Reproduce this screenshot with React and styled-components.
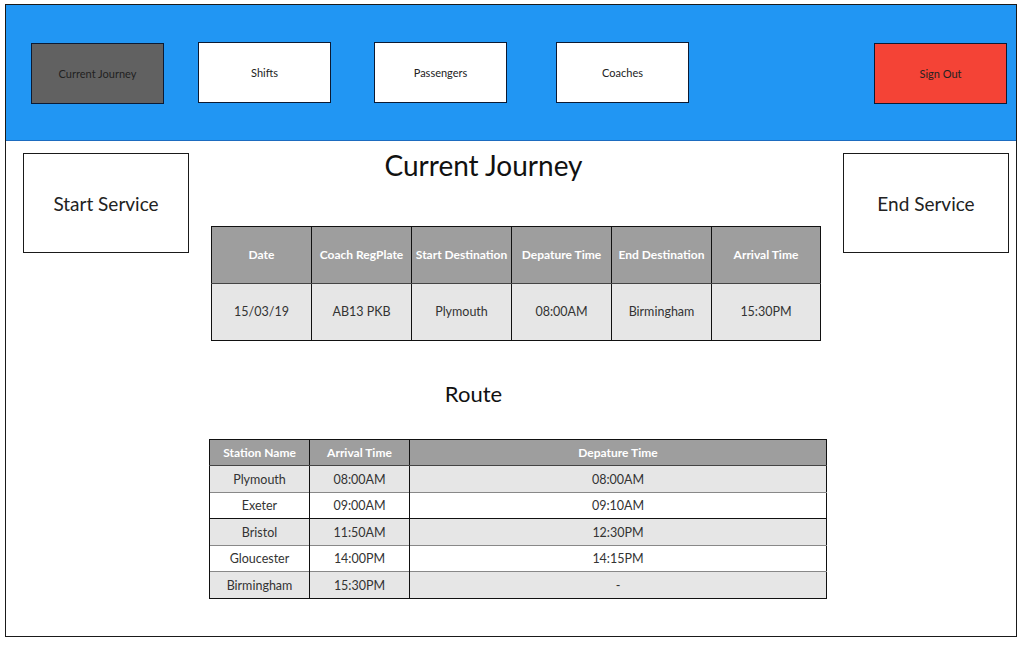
import React from 'react'
import styled, { createGlobalStyle } from 'styled-components'

const GlobalStyle = createGlobalStyle`
  body {
    margin: 0;
    background: #ffffff;
    font-family: Lato, "Open Sans", sans-serif;
  }
`

const Frame = styled.div`
  margin: 4px 0 0 5px;
  width: 1010px;
  height: 631px;
  border: 1px solid #1a1a1a;
  display: flex;
  flex-direction: column;
`

const Header = styled.div`
  height: 135px;
  background-color: #2196f3;
  border-bottom: 1px solid #1d6cc0;
  display: flex;
  align-items: center;
  padding: 0 9px 0 25px;
`

const NavButton = styled.div`
  width: 131px;
  height: 59px;
  flex-shrink: 0;
  border: 1px solid #0b1a33;
  display: flex;
  align-items: center;
  justify-content: center;
  font-size: 11px;
  color: #222;
  background-color: ${({ $bg }) => $bg || '#ffffff'};
  margin-left: ${({ $gap }) => $gap || '0'};
  margin-top: ${({ $dy }) => $dy || '0'};
`

const Body = styled.div`
  flex: 1;
  display: flex;
  align-items: flex-start;
  padding: 12px 7px 0 17px;
`

const SideButton = styled.div`
  width: 164px;
  height: 98px;
  border: 1px solid #1a1a1a;
  display: flex;
  align-items: center;
  justify-content: center;
  font-size: 19px;
  color: #222;
  flex-shrink: 0;
`

const Center = styled.div`
  flex: 1;
  display: flex;
  flex-direction: column;
`

const Heading = styled.div`
  text-align: center;
  color: #111;
  font-size: ${({ $size }) => $size};
  padding-right: ${({ $shift }) => $shift};
  margin-top: ${({ $top }) => $top};
  line-height: 1.2;
`

const Table = styled.table`
  border-collapse: collapse;
  table-layout: fixed;
  width: ${({ $width }) => $width};
  margin-left: ${({ $left }) => $left};
  margin-top: ${({ $top }) => $top};
  border: 1px solid #111;
  font-size: 12px;
`

const HeadCell = styled.th`
  background-color: #9e9e9e;
  color: #ffffff;
  font-weight: 700;
  height: ${({ $h }) => $h};
  border-left: 1px solid #111;
  border-bottom: 1px solid #444;
  padding: 0;
  text-align: center;
  white-space: nowrap;
`

const Cell = styled.td`
  background-color: ${({ $alt }) => ($alt ? '#ffffff' : '#e6e6e6')};
  color: #333;
  font-size: 12.5px;
  height: ${({ $h }) => $h};
  border-left: 1px solid #111;
  border-top: 1px solid ${({ $line }) => $line || '#111'};
  padding: 0;
  text-align: center;
`

const journeyCols = ['Date', 'Coach RegPlate', 'Start Destination', 'Depature Time', 'End Destination', 'Arrival Time']
const journeyRow = ['15/03/19', 'AB13 PKB', 'Plymouth', '08:00AM', 'Birmingham', '15:30PM']

const stops = [
  ['Plymouth', '08:00AM', '08:00AM', '#444'],
  ['Exeter', '09:00AM', '09:10AM', '#888'],
  ['Bristol', '11:50AM', '12:30PM', '#111'],
  ['Gloucester', '14:00PM', '14:15PM', '#888'],
  ['Birmingham', '15:30PM', '-', '#888'],
]

const App = () => {
  return (
    <>
      <GlobalStyle />
      <Frame>
        <Header>
          <NavButton $bg="#616161" $dy="1px">Current Journey</NavButton>
          <NavButton $gap="34px" $dy="-1px">Shifts</NavButton>
          <NavButton $gap="43px" $dy="-1px">Passengers</NavButton>
          <NavButton $gap="49px" $dy="-1px">Coaches</NavButton>
          <NavButton $bg="#f44336" $gap="auto" $dy="1px">Sign Out</NavButton>
        </Header>
        <Body>
          <SideButton>Start Service</SideButton>
          <Center>
            <Heading $size="28px" $shift="65px" $top="-4px">Current Journey</Heading>
            <Table $width="609px" $left="22px" $top="43px">
              <colgroup>
                <col style={{ width: 100 }} />
                <col style={{ width: 100 }} />
                <col style={{ width: 100 }} />
                <col style={{ width: 100 }} />
                <col style={{ width: 100 }} />
                <col style={{ width: 109 }} />
              </colgroup>
              <thead>
                <tr>
                  {journeyCols.map((c) => (
                    <HeadCell key={c} $h="56px">{c}</HeadCell>
                  ))}
                </tr>
              </thead>
              <tbody>
                <tr>
                  {journeyRow.map((v, i) => (
                    <Cell key={i} $h="56px">{v}</Cell>
                  ))}
                </tr>
              </tbody>
            </Table>
            <Heading $size="22px" $shift="85px" $top="40px">Route</Heading>
            <Table $width="618px" $left="20px" $top="32px">
              <colgroup>
                <col style={{ width: 100 }} />
                <col style={{ width: 100 }} />
                <col />
              </colgroup>
              <thead>
                <tr>
                  <HeadCell $h="25.5px">Station Name</HeadCell>
                  <HeadCell $h="25.5px">Arrival Time</HeadCell>
                  <HeadCell $h="25.5px">Depature Time</HeadCell>
                </tr>
              </thead>
              <tbody>
                {stops.map(([name, arr, dep, line], i) => (
                  <tr key={name}>
                    <Cell $h="25.5px" $alt={i % 2 === 1} $line={line}>{name}</Cell>
                    <Cell $h="25.5px" $alt={i % 2 === 1} $line={line}>{arr}</Cell>
                    <Cell $h="25.5px" $alt={i % 2 === 1} $line={line}>{dep}</Cell>
                  </tr>
                ))}
              </tbody>
            </Table>
          </Center>
          <SideButton>End Service</SideButton>
        </Body>
      </Frame>
    </>
  )
}

export default App
